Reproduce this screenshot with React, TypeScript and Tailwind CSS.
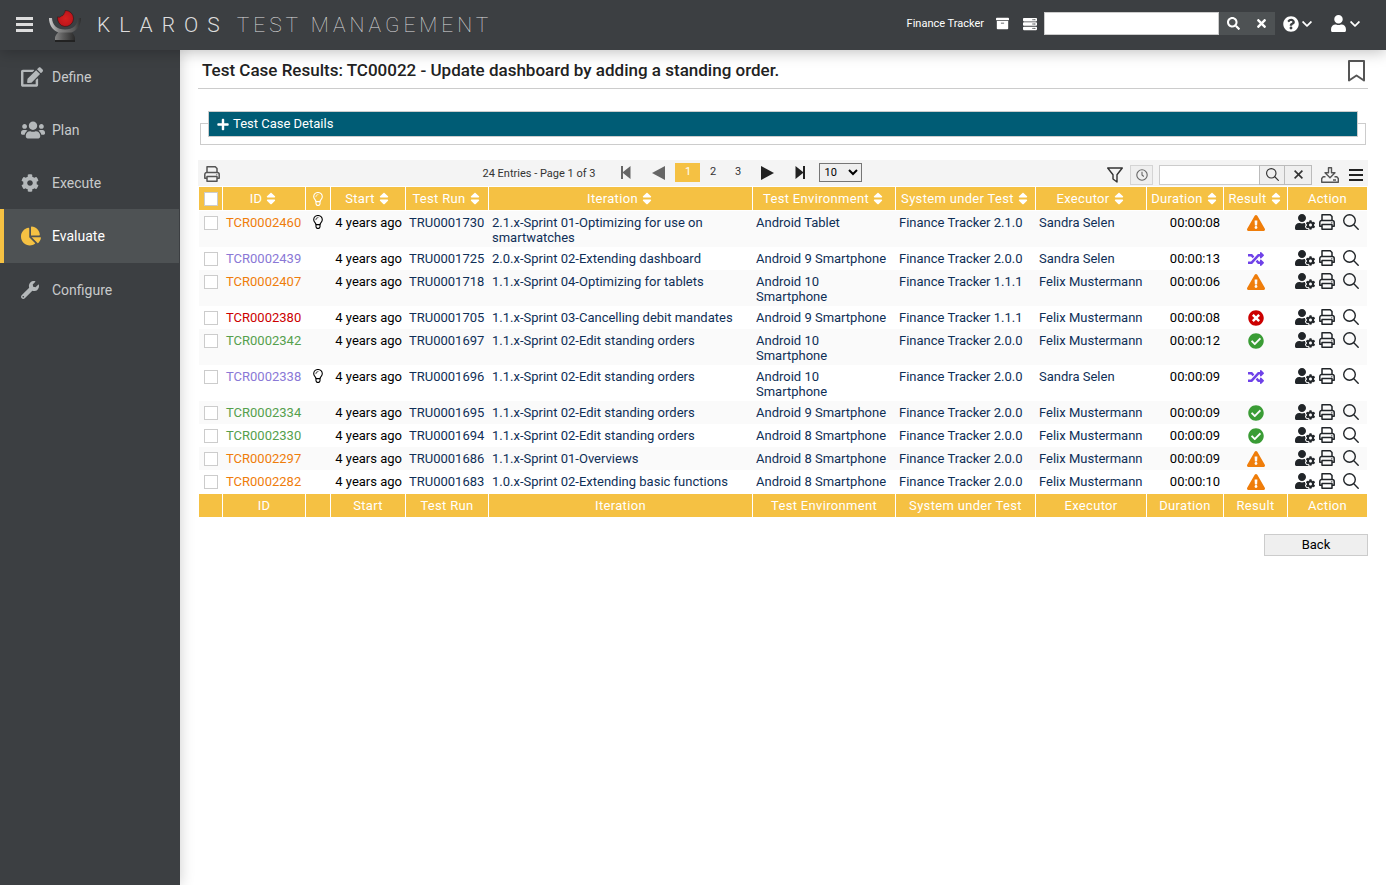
import React from "react";
import {
  FaArchive,
  FaChartPie,
  FaCheckCircle,
  FaChevronDown,
  FaCog,
  FaEdit,
  FaExclamationTriangle,
  FaPlus,
  FaQuestionCircle,
  FaRandom,
  FaSearch,
  FaServer,
  FaSort,
  FaTimes,
  FaTimesCircle,
  FaUser,
  FaUserCog,
  FaUsers,
  FaWrench,
} from "react-icons/fa";

type Result = "error" | "skipped" | "failed" | "passed";

interface Row {
  id: string;
  hint?: boolean;
  run: string;
  iteration: string;
  env: string;
  sut: string;
  executor: string;
  duration: string;
  result: Result;
}

const rows: Row[] = [
  { id: "TCR0002460", hint: true, run: "TRU0001730", iteration: "2.1.x-Sprint 01-Optimizing for use on smartwatches", env: "Android Tablet", sut: "Finance Tracker 2.1.0", executor: "Sandra Selen", duration: "00:00:08", result: "error" },
  { id: "TCR0002439", run: "TRU0001725", iteration: "2.0.x-Sprint 02-Extending dashboard", env: "Android 9 Smartphone", sut: "Finance Tracker 2.0.0", executor: "Sandra Selen", duration: "00:00:13", result: "skipped" },
  { id: "TCR0002407", run: "TRU0001718", iteration: "1.1.x-Sprint 04-Optimizing for tablets", env: "Android 10 Smartphone", sut: "Finance Tracker 1.1.1", executor: "Felix Mustermann", duration: "00:00:06", result: "error" },
  { id: "TCR0002380", run: "TRU0001705", iteration: "1.1.x-Sprint 03-Cancelling debit mandates", env: "Android 9 Smartphone", sut: "Finance Tracker 1.1.1", executor: "Felix Mustermann", duration: "00:00:08", result: "failed" },
  { id: "TCR0002342", run: "TRU0001697", iteration: "1.1.x-Sprint 02-Edit standing orders", env: "Android 10 Smartphone", sut: "Finance Tracker 2.0.0", executor: "Felix Mustermann", duration: "00:00:12", result: "passed" },
  { id: "TCR0002338", hint: true, run: "TRU0001696", iteration: "1.1.x-Sprint 02-Edit standing orders", env: "Android 10 Smartphone", sut: "Finance Tracker 2.0.0", executor: "Sandra Selen", duration: "00:00:09", result: "skipped" },
  { id: "TCR0002334", run: "TRU0001695", iteration: "1.1.x-Sprint 02-Edit standing orders", env: "Android 9 Smartphone", sut: "Finance Tracker 2.0.0", executor: "Felix Mustermann", duration: "00:00:09", result: "passed" },
  { id: "TCR0002330", run: "TRU0001694", iteration: "1.1.x-Sprint 02-Edit standing orders", env: "Android 8 Smartphone", sut: "Finance Tracker 2.0.0", executor: "Felix Mustermann", duration: "00:00:09", result: "passed" },
  { id: "TCR0002297", run: "TRU0001686", iteration: "1.1.x-Sprint 01-Overviews", env: "Android 8 Smartphone", sut: "Finance Tracker 2.0.0", executor: "Felix Mustermann", duration: "00:00:09", result: "error" },
  { id: "TCR0002282", run: "TRU0001683", iteration: "1.0.x-Sprint 02-Extending basic functions", env: "Android 8 Smartphone", sut: "Finance Tracker 2.0.0", executor: "Felix Mustermann", duration: "00:00:10", result: "error" },
];

const idColor: Record<Result, string> = {
  error: "text-[#ef7d0a]",
  skipped: "text-[#8a78d6]",
  failed: "text-[#cc0000]",
  passed: "text-[#55a04c]",
};

function ResultIcon({ result }: { result: Result }) {
  if (result === "error") return <FaExclamationTriangle className="size-[18px] text-[#ef7d0a]" />;
  if (result === "skipped") return <FaRandom className="size-4 text-[#6f42e8]" />;
  if (result === "failed") return <FaTimesCircle className="size-4 text-[#cc0000]" />;
  return <FaCheckCircle className="size-4 text-[#3a9c35]" />;
}

function Printer() {
  return (
    <svg viewBox="0 0 16 16" className="size-4" fill="none" stroke="currentColor" strokeWidth="1.5" strokeLinejoin="round">
      <path d="M3 6.500V.8h8.300L13 2.500v4" />
      <path d="M3 12.200H.8V8.500a2 2 0 0 1 2-2h10.400a2 2 0 0 1 2 2v3.700H13" />
      <path d="M3 10.600h10v4.600H3z" />
      <circle cx="12.800" cy="8.800" r=".4" strokeWidth=".6" />
    </svg>
  );
}

function Magnifier({ className }: { className: string }) {
  return (
    <svg viewBox="0 0 16 16" className={className} fill="none" stroke="currentColor" strokeWidth="1.4" strokeLinecap="round">
      <circle cx="6.500" cy="6.500" r="5.800" />
      <path d="M10.800 10.800l4.400 4.400" />
    </svg>
  );
}

function Bulb() {
  return (
    <svg viewBox="0 0 10 14" className="mx-auto h-[14px] w-[10px]" fill="none" stroke="currentColor" strokeWidth="1.1" strokeLinecap="round" strokeLinejoin="round">
      <path d="M3 9.600C3 8 .7 7 .7 4.700a4.300 4.200 0 0 1 8.600 0C9.300 7 7 8 7 9.600z" />
      <path d="M3 9.600v2.400l1 1.400h2l1-1.400V9.600" />
      <path d="M2.800 4.700A2.200 2.200 0 0 1 5 2.500" strokeWidth=".7" />
    </svg>
  );
}

function Logo() {
  return (
    <svg viewBox="0 0 32 32" className="size-8">
      <defs>
        <linearGradient id="base" x1="0" y1="0" x2="1" y2="0">
          <stop offset="0" stopColor="#858585" />
          <stop offset=".4" stopColor="#5c5c5c" />
          <stop offset="1" stopColor="#2a2a2a" />
        </linearGradient>
        <linearGradient id="arm" x1="0" y1="0" x2="1" y2="0">
          <stop offset="0" stopColor="#cfcfcf" />
          <stop offset=".3" stopColor="#868686" />
          <stop offset=".8" stopColor="#585858" />
          <stop offset="1" stopColor="#2c2c2c" />
        </linearGradient>
        <radialGradient id="ball" cx=".5" cy=".5" r=".6">
          <stop offset="0" stopColor="#d6201f" />
          <stop offset=".75" stopColor="#c0161c" />
          <stop offset="1" stopColor="#5c0c0e" />
        </radialGradient>
      </defs>
      <path d="M10 20.500h12c.3 2.500 4 4 4 8v3H6v-3c0-4 3.700-5.500 4-8z" fill="url(#base)" />
      <path d="M6 30h20v2H6z" fill="#222" />
      <path d="M0 8h3c.3 7 5 11.500 13 11.500S28.700 15 29 8h3c0 7-3.500 12-9.500 14.500h-13C3.500 20 0 15 0 8z" fill="url(#arm)" />
      <path d="M16 .5a8 8 0 1 1-7.300 6.300c1.500.9 3 .4 3.300-.8 1.500 0 2.700-.8 2.800-2.200.9-.8 1.400-1.900 1.200-3.300z" fill="url(#ball)" stroke="#2a1212" strokeWidth=".5" />
    </svg>
  );
}

const nav = [
  { label: "Define", icon: FaEdit, size: "h-5 w-[22px]" },
  { label: "Plan", icon: FaUsers, size: "h-6 w-6" },
  { label: "Execute", icon: FaCog, size: "h-[18px] w-[18px]" },
  { label: "Evaluate", icon: FaChartPie, size: "h-5 w-5", active: true },
  { label: "Configure", icon: FaWrench, size: "h-[18px] w-[18px]" },
];

const columns = [
  { label: "ID", width: "w-[83px]", sort: true },
  { label: "", width: "w-[25px]" },
  { label: "Start", width: "w-[75px]", sort: true },
  { label: "Test Run", width: "w-[83px]", sort: true },
  { label: "Iteration", width: "", sort: true },
  { label: "Test Environment", width: "w-[143px]", sort: true },
  { label: "System under Test", width: "w-[140px]", sort: true },
  { label: "Executor", width: "w-[111px]", sort: true },
  { label: "Duration", width: "w-[77px]", sort: true },
  { label: "Result", width: "w-[64px]", sort: true },
  { label: "Action", width: "w-[79px]" },
];

const checkbox = "block size-[14px] appearance-none border border-[#ccc] bg-white checked:bg-[#f5c143]";
const headCell = "h-6 border-r border-white p-0 text-center font-normal tracking-wide last:border-r-0";
const cell = "pt-1 pr-1 pb-[2px] pl-[3px]";

function Header() {
  return (
    <header className="relative z-10 flex h-[50px] items-center bg-[#3c3f42] pb-px text-white shadow-[0_2px_14px_rgba(0,0,0,0.25)]">
      <button aria-label="Toggle menu" className="ml-4 text-[#ddd]">
        <svg viewBox="0 0 17 15" className="h-[15px] w-[17px]" fill="currentColor">
          <path d="M0 0h17v3H0zM0 6h17v3H0zM0 12h17v3H0z" />
        </svg>
      </button>
      <a href="#home" className="ml-4 flex items-center pt-[3px] text-[21px] text-[#ddd]">
        <Logo />
        <span className="ml-4 font-light tracking-[9px]">KLAROS</span>
        <span className="ml-2 font-thin tracking-[4px]">TEST MANAGEMENT</span>
      </a>
      <div className="ml-auto flex items-center pr-[26px] pb-[2px]">
        <span className="pt-[2px] text-[11px]">Finance Tracker</span>
        <button aria-label="Archive" className="ml-3"><FaArchive className="size-[13px]" /></button>
        <button aria-label="Servers" className="ml-[14px]"><FaServer className="size-[14px]" /></button>
        <input aria-label="Search" className="ml-[7px] h-[23px] w-[175px] border border-[#ccc] bg-white px-1 text-[13px] text-black" />
        <button aria-label="Run search" className="flex h-[23px] w-7 items-center justify-center bg-[#4e5254]"><FaSearch className="size-[13px]" /></button>
        <button aria-label="Clear search" className="flex h-[23px] w-7 items-center justify-center bg-[#4e5254]"><FaTimes className="size-[13px]" /></button>
        <button aria-label="Help" className="ml-2 flex items-center gap-[3px]"><FaQuestionCircle className="size-4" /><FaChevronDown className="h-3 w-[10px]" /></button>
        <button aria-label="Account" className="ml-[19px] flex items-center gap-1"><FaUser className="h-[17px] w-[15px]" /><FaChevronDown className="h-3 w-[10px]" /></button>
      </div>
    </header>
  );
}

function Sidebar() {
  return (
    <nav className="w-[180px] shrink-0 bg-[#3c3f42] text-sm shadow-[0_0_14px_rgba(0,0,0,0.2)]">
      {nav.map(({ label, icon: Icon, size, active }) => (
        <a
          key={label}
          href={`#${label.toLowerCase()}`}
          className={
            active
              ? "mr-px flex h-[54px] items-center border-l-4 border-[#f5c143] bg-[#4e5254] pl-[17px] text-white"
              : "mr-px flex h-[53px] items-center border-l-4 border-transparent pl-[17px] text-[#c8cacb]"
          }
        >
          <span className={active ? "flex w-[31px] text-[#f5c143]" : "flex w-[31px] text-[#b4b8ba]"}>
            <Icon className={size} />
          </span>
          {label}
        </a>
      ))}
    </nav>
  );
}

function Toolbar() {
  return (
    <div className="flex h-[26px] items-center bg-[#f4f4f4] pr-[5px] pl-[6px] text-[#333]">
      <button aria-label="Print list" className="pt-[2px] text-[#555]"><Printer /></button>
      <div className="flex flex-1 items-center justify-center pb-px pl-[18px] text-[11px]">
        <span className="mr-[26px] pt-1">24 Entries - Page 1 of 3</span>
        <button aria-label="First page" className="text-[#666]">
          <svg viewBox="0 0 10 13" className="h-[13px] w-[10px]" fill="currentColor"><path d="M0 0h2v6L9.500 0v13L2 7v6H0z" /></svg>
        </button>
        <button aria-label="Previous page" className="ml-[21px] text-[#666]">
          <svg viewBox="0 0 13 14" className="h-[14px] w-[13px]" fill="currentColor"><path d="M13 0v14L0 7z" /></svg>
        </button>
        <button className="ml-[10px] h-[19px] w-[25px] bg-[#f5c143] pb-px text-white">1</button>
        <button className="h-[19px] w-[25px] pb-px">2</button>
        <button className="h-[19px] w-[25px] pb-px">3</button>
        <button aria-label="Next page" className="ml-[11px] text-[#222]">
          <svg viewBox="0 0 13 14" className="h-[14px] w-[13px]" fill="currentColor"><path d="M0 0v14l13-7z" /></svg>
        </button>
        <button aria-label="Last page" className="ml-[21px] text-[#222]">
          <svg viewBox="0 0 10 13" className="h-[13px] w-[10px]" fill="currentColor"><path d="M10 0H8v6L.5 0v13L8 7v6h2z" /></svg>
        </button>
        <select aria-label="Entries per page" defaultValue="10" className="ml-[14px] h-[19px] w-[43px] border border-[#767676] bg-[#efefef] text-[11px] text-black">
          <option>10</option>
          <option>20</option>
          <option>50</option>
        </select>
      </div>
      <div className="flex items-center pt-[3px]">
        <button aria-label="Filter">
          <svg viewBox="0 0 16 16" className="size-4" fill="none" stroke="currentColor" strokeWidth="1.4" strokeLinejoin="round"><path d="M.7 1h14.600L10 7.800v7.200L6 12V7.800z" /></svg>
        </button>
        <button aria-label="Recent" className="ml-[7px] flex h-5 w-[23px] items-center justify-center border border-[#d4d4d4] bg-[#efefef] text-[#666]">
          <svg viewBox="0 0 12 12" className="size-3" fill="none" stroke="currentColor" strokeWidth="1.100"><circle cx="6" cy="6" r="5.200" /><path d="M6 2.800V6l1.800 1.500" /></svg>
        </button>
        <input aria-label="Filter entries" className="ml-[6px] h-5 w-[101px] border border-[#ccc] bg-white px-1 text-[12px]" />
        <button aria-label="Apply" className="-ml-px flex h-5 w-[26px] items-center justify-center border border-[#bbb] bg-[#efefef]"><Magnifier className="size-[13px]" /></button>
        <button aria-label="Reset" className="-ml-px flex h-5 w-7 items-center justify-center border border-[#bbb] bg-[#efefef]">
          <svg viewBox="0 0 9 9" className="size-[9px]" stroke="currentColor" strokeWidth="1.600"><path d="M.6.6l7.800 7.800M8.400.6L.6 8.400" /></svg>
        </button>
        <button aria-label="Export" className="ml-[9px] text-[#555]">
          <svg viewBox="0 0 18 16" className="h-4 w-[18px]" fill="none" stroke="currentColor" strokeWidth="1.400" strokeLinejoin="round">
            <path d="M7.500.7h3v5H14l-5 5-5-5h3.500z" />
            <path d="M4.500 9.700H2.200L.7 11.500v3.800h16.600v-3.800l-1.500-1.800h-2.300M12 13h3" />
          </svg>
        </button>
        <button aria-label="Columns" className="ml-[10px] text-[#222]">
          <svg viewBox="0 0 14 12" className="h-3 w-[14px]" fill="currentColor"><path d="M0 0h14v2H0zM0 5h14v2H0zM0 10h14v2H0z" /></svg>
        </button>
      </div>
    </div>
  );
}

function ResultsTable() {
  return (
    <table className="mx-px mt-px w-[calc(100%-2px)] table-fixed border-separate border-spacing-0 text-[13px] leading-[15px]">
      <thead className="bg-[#f5c143] text-white">
        <tr>
          <th className={`${headCell} w-[24px] border-b`}>
            <input type="checkbox" aria-label="Select all" className={`${checkbox} mx-auto`} />
          </th>
          {columns.map((c, i) => (
            <th key={i} className={`${headCell} ${c.width} border-b`}>
              <span className={c.sort ? "flex items-center justify-center gap-1 pr-[2px] whitespace-nowrap" : "block"}>
                {c.label || <Bulb />}
                {c.sort && <FaSort className="h-[15px] w-[10px] shrink-0" />}
              </span>
            </th>
          ))}
        </tr>
      </thead>
      <tbody>
        {rows.map((r) => (
          <tr key={r.id} className="h-[23px] align-top text-[#0f2f57] odd:bg-[#fafafa]">
            <td className="pt-[5px] pl-[5px]">
              <input type="checkbox" aria-label={`Select ${r.id}`} className={checkbox} />
            </td>
            <td className={cell}><a href={`#${r.id}`} className={idColor[r.result]}>{r.id}</a></td>
            <td className="pt-1 pr-px text-black">{r.hint && <Bulb />}</td>
            <td className={`${cell} text-right whitespace-nowrap text-black`}>4 years ago</td>
            <td className={cell}><a href={`#${r.run}`}>{r.run}</a></td>
            <td className={cell}><a href="#iteration">{r.iteration}</a></td>
            <td className={cell}><a href="#environment">{r.env}</a></td>
            <td className={cell}><a href="#sut">{r.sut}</a></td>
            <td className={cell}><a href="#executor">{r.executor}</a></td>
            <td className={`${cell} text-right text-black`}>{r.duration}</td>
            <td className="p-0">
              <span className="flex h-[23px] items-center justify-center pr-px"><ResultIcon result={r.result} /></span>
            </td>
            <td className="p-0">
              <span className="flex h-[22px] items-center pl-[7px] text-[#212529]">
                <button aria-label={`Assign ${r.id}`}><FaUserCog className="h-4 w-5" /></button>
                <button aria-label={`Print ${r.id}`} className="ml-1"><Printer /></button>
                <button aria-label={`View ${r.id}`} className="ml-2"><Magnifier className="size-4" /></button>
              </span>
            </td>
          </tr>
        ))}
      </tbody>
      <tfoot className="bg-[#f5c143] text-white">
        <tr>
          <td className={`${headCell} border-t`} />
          {columns.map((c, i) => (
            <td key={i} className={`${headCell} border-t`}>{c.label}</td>
          ))}
        </tr>
      </tfoot>
    </table>
  );
}

export default function App() {
  return (
    <div className="flex min-h-screen flex-col bg-white font-[Roboto,sans-serif] text-black">
      <Header />
      <div className="flex flex-1">
        <Sidebar />
        <main className="min-w-0 flex-1 px-[18px]">
          <div className="flex h-[39px] items-center justify-between border-b border-[#ccc] pt-[3px] pr-[3px] pl-1">
            <h1 className="text-[17px] font-medium text-[#222]">Test Case Results: TC00022 - Update dashboard by adding a standing order.</h1>
            <button aria-label="Bookmark" className="text-[#555]">
              <svg viewBox="0 0 17 22" className="h-[22px] w-[17px]" fill="none" stroke="currentColor" strokeWidth="2" strokeLinejoin="round"><path d="M1 1h15v19.500l-7.500-5-7.500 5z" /></svg>
            </button>
          </div>
          <section className="mx-[2px] mt-[34px] h-[22px] border border-[#ccc] px-[7px]">
            <button className="-mt-[13px] flex h-[26px] w-full items-center border border-[#ccc] bg-[#005c75] pl-[7px] text-[13px] text-white">
              <FaPlus className="mr-[3px] size-[14px] pt-px" />
              Test Case Details
            </button>
          </section>
          <div className="mt-[15px]">
            <Toolbar />
            <ResultsTable />
          </div>
          <div className="mt-[17px] flex justify-end">
            <button className="h-[22px] w-[104px] border border-[#ccc] bg-[#efefef] text-[13px]">Back</button>
          </div>
        </main>
      </div>
    </div>
  );
}
